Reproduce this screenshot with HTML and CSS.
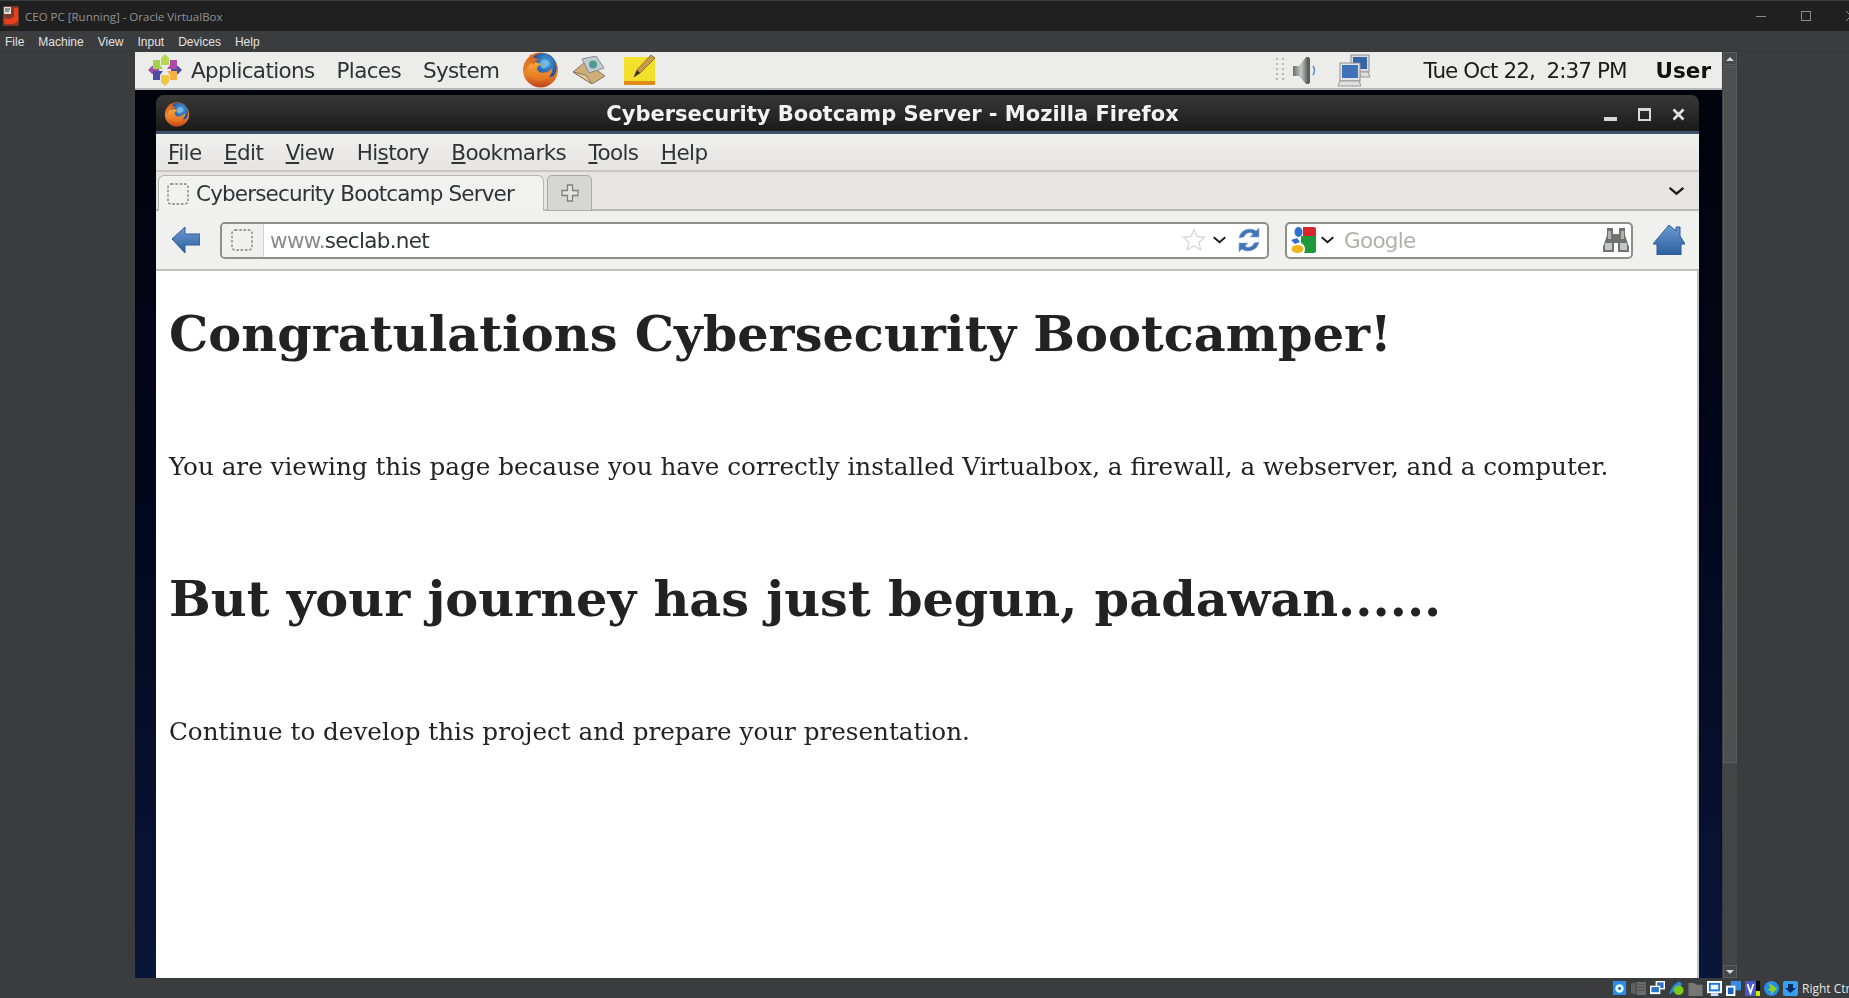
FILE: index.html
```html
<!DOCTYPE html>
<html lang="en">
<head>
<meta charset="utf-8">
<title>CEO PC [Running] - Oracle VirtualBox</title>
<link rel="stylesheet" href="styles.css">
</head>
<body>
<svg class="defs" aria-hidden="true">
  <defs>
    <linearGradient id="gOrange" x1="0" y1="0" x2="0" y2="1"><stop offset="0" stop-color="#d9641f"/><stop offset=".6" stop-color="#e8862a"/><stop offset="1" stop-color="#c2451a"/></linearGradient>
    <linearGradient id="gOrange2" x1="0" y1="0" x2="0" y2="1"><stop offset="0" stop-color="#f4a83a"/><stop offset="1" stop-color="#e56e1e"/></linearGradient>
    <radialGradient id="gGlobe" cx=".55" cy=".4" r=".6"><stop offset="0" stop-color="#4fa6e0"/><stop offset="1" stop-color="#1d4c9c"/></radialGradient>
    <linearGradient id="gBlue" x1="0" y1="0" x2="0" y2="1"><stop offset="0" stop-color="#6d9bd2"/><stop offset="1" stop-color="#2c5f9f"/></linearGradient>
    <linearGradient id="gCone" x1="0" y1="0" x2="1" y2="0"><stop offset="0" stop-color="#6c6e6b"/><stop offset=".5" stop-color="#c4c6c3"/><stop offset="1" stop-color="#4f514e"/></linearGradient>
    <symbol id="fox" viewBox="0 0 36 36">
      <circle cx="18" cy="18" r="17.500" fill="url(#gOrange)"/>
      <path d="M11 5C14 1 20 .5 25 2c6 2 9 8 9 14 0 3-1 6-3 8-5 2-12 1-15-3-3-3-3-8-5-16z" fill="url(#gGlobe)"/>
      <path d="M20 8c3-1 6 0 7 3 1 2-1 3-3 4-2 2-5 2-6-1-1-2 0-5 2-6z" fill="#8fd0ee" opacity=".6"/>
      <path d="M5 15C8 9 15 9 19 13c-3 0-5 2-4 5 2 4 9 4 15-2 0 7-6 14-14 13C9 28 4 22 5 15z" fill="url(#gOrange2)"/>
      <path d="M8 2c-1 4 0 8 3 11 1-3 3-5 6-6-4 0-7-2-9-5z" fill="#dd6a20"/>
    </symbol>
    <symbol id="dash" viewBox="0 0 22 22">
      <rect x="1" y="1" width="20" height="20" rx="3" fill="none" stroke="#7a7a7a" stroke-width="1.300" stroke-dasharray="2.500 1.800"/>
    </symbol>
    <symbol id="chev" viewBox="0 0 16 9">
      <path d="M1.500 1.500 8 7l6.500-5.500" fill="none" stroke="#1c1c1c" stroke-width="2.200"/>
    </symbol>
  </defs>
</svg>

<header class="vb-title">
  <svg class="vb-logo" viewBox="0 0 16 20"><rect width="16" height="20" rx="1" fill="#7d3a2c"/><path d="M1 12c4 2 8 1 10-2V2h4v12c-1 3-4 4-7 4H2c-1-1-1-4-1-6z" fill="#e8401c"/><rect x="1" y="1" width="7" height="7" fill="#ddd"/><path d="M2 3h5M2 5h4" stroke="#444"/></svg>
  <span class="vb-title-text">CEO PC [Running] - Oracle VirtualBox</span>
  <span class="vb-controls">
    <i class="ctl-min"></i><i class="ctl-max"></i>
    <svg class="ctl-close" viewBox="0 0 10 10"><path d="M0 0l10 10M10 0 0 10" stroke="#8c8c8c"/></svg>
  </span>
</header>
<nav class="vb-menu"><span>File</span><span>Machine</span><span>View</span><span>Input</span><span>Devices</span><span>Help</span></nav>

<main class="vb-main">
  <section class="guest">
    <div class="panel">
      <svg class="centos" viewBox="0 0 34 32">
        <path d="M17 0l4 4v7h-8V4z" fill="#b6d84c"/><path d="M17 32l-4-4v-7h8v7z" fill="#f2c640"/><path d="M0 16l4-4h7v8H4z" fill="#a14ea8"/><path d="M34 16l-4 4h-7v-8h7z" fill="#4a4ca4"/>
        <path d="M5 6h7v5l3 4H5z" fill="#a4d04c"/><path d="M29 6h-7v5l-3 4h10z" fill="#b04aa4"/><path d="M5 26h7v-5l3-4H5z" fill="#4a4ca4"/><path d="M29 26h-7v-5l-3-4h10z" fill="#f4b040"/>
      </svg>
      <span class="pm pm-apps">Applications</span>
      <span class="pm pm-places">Places</span>
      <span class="pm pm-system">System</span>
      <svg class="p-fox"><use href="#fox"/></svg>
      <svg class="p-mail" viewBox="0 0 34 28">
        <path d="M1 16 13 6l20 14-13 8z" fill="#cfae7a" stroke="#8c7a5c"/>
        <path d="M10 3l14-3 8 12-15 5z" fill="#c4ccd2" stroke="#7f8a92"/><circle cx="21" cy="8.500" r="4" fill="#4f9a92"/>
        <path d="M1 16l13 3 6 9z" fill="#e0c598" stroke="#8c7a5c"/>
      </svg>
      <svg class="p-note" viewBox="0 0 34 32">
        <rect x="1" y="4" width="31" height="27" rx="1" fill="#e08a1a"/><rect x="1" y="3" width="31" height="24" fill="#f3e02a"/>
        <path d="M11 23l3-7L28 1l4 3-15 15z" fill="#c99a50" stroke="#7a5a30" stroke-width=".8"/><path d="M11 23l3-7 3 3z" fill="#3a3020"/>
      </svg>
      <span class="p-right">
        <svg class="p-dots" viewBox="0 0 8 27"><path d="M1 1v25M7 1v25" stroke="#b5b5b5" stroke-width="2" stroke-dasharray="2 3"/></svg>
        <svg class="p-speaker" viewBox="0 0 25 29">
          <path d="M1 10h6l7-9h3v27h-3l-7-8H1z" fill="url(#gCone)"/><path d="M15 2h3v25h-3z" fill="#5b5d5a"/>
          <path d="M21 10c2 3 2 6 0 9" fill="none" stroke="#5c8fd0" stroke-width="1.600"/>
        </svg>
        <svg class="p-net" viewBox="0 0 34 33">
          <rect x="14" y="1" width="18" height="17" fill="#ddd" stroke="#8d8d8d"/><rect x="16" y="3" width="14" height="12" fill="#3566a8"/>
          <path d="M22 18h9l2 5H24z" fill="#ddd" stroke="#999"/>
          <rect x="3" y="9" width="20" height="18" fill="#e4e4e4" stroke="#8d8d8d"/><rect x="5" y="11" width="16" height="13" fill="#3f72b8"/>
          <path d="M3 27h19l2 5H1z" fill="#e0e0e0" stroke="#999"/>
        </svg>
        <span class="p-clock">Tue Oct 22,  2:37 PM</span>
        <strong class="p-user">User</strong>
      </span>
    </div>

    <div class="desktop">
      <article class="window">
        <div class="wm-title">
          <svg class="wm-fox"><use href="#fox"/></svg>
          <span class="wm-text">Cybersecurity Bootcamp Server - Mozilla Firefox</span>
          <span class="wm-btns">
            <i class="wm-min"></i><i class="wm-max"></i>
            <svg class="wm-close" viewBox="0 0 13 13"><path d="M1.500 1.500l10 10M11.500 1.500l-10 10" stroke="#e4e4e4" stroke-width="2.600"/></svg>
          </span>
        </div>

        <div class="ff-menu">
          <span><u>F</u>ile</span><span><u>E</u>dit</span><span><u>V</u>iew</span><span>Hi<u>s</u>tory</span><span><u>B</u>ookmarks</span><span><u>T</u>ools</span><span><u>H</u>elp</span>
        </div>

        <div class="ff-tabs">
          <div class="tab">
            <svg class="fav"><use href="#dash"/></svg>
            <span>Cybersecurity Bootcamp Server</span>
          </div>
          <div class="newtab">
            <svg viewBox="0 0 18 18"><path d="M6.500 1h5v5.500H17v5h-5.500V17h-5v-5.500H1v-5h5.500z" fill="#e4e4e2" stroke="#7e7e7e" stroke-width="1.300"/></svg>
          </div>
          <svg class="chev tab-chev"><use href="#chev"/></svg>
        </div>

        <div class="ff-nav">
          <svg class="back" viewBox="0 0 28 29">
            <path d="M0 13 13 1v7h15v11H13v8z" fill="url(#gBlue)" stroke="#2a5c9c"/>
          </svg>
          <div class="urlbar">
            <div class="identity"><svg class="fav"><use href="#dash"/></svg></div>
            <span class="url"><span class="url-dim">www.</span>seclab.net</span>
            <svg class="star" viewBox="0 0 24 24"><path d="M12 1.500l3.200 7 7.300.8-5.500 5 1.600 7.500L12 18l-6.600 3.800L7 14.300l-5.500-5 7.300-.8z" fill="#fff" stroke="#d6d6d6" stroke-width="1.300"/></svg>
            <svg class="chev url-chev"><use href="#chev"/></svg>
            <svg class="reload" viewBox="0 0 24 26">
              <path d="M2 11C3 5 8 2 13 2c3 0 5 1 6 2l3-3v9h-9l3-3c-2-2-7-2-9 3z" fill="#3f74b8" stroke="#8fb0d8" stroke-width=".6"/>
              <path d="M22 15c-1 6-6 9-11 9-3 0-5-1-6-2l-3 3v-9h9l-3 3c2 2 7 2 9-3z" fill="#3f74b8" stroke="#8fb0d8" stroke-width=".6"/>
            </svg>
          </div>
          <div class="searchbar">
            <svg class="google" viewBox="0 0 25 26">
              <path d="M12 0h11c1 0 2 1 2 2v7H12z" fill="#d8262c"/>
              <path d="M10 9h15v15c0 1-1 2-2 2H13c2-4 1-8-3-10z" fill="#1e9a3c"/>
              <ellipse cx="7.500" cy="5" rx="4" ry="5" fill="#2f6fd0"/>
              <path d="M0 13l6-2 3 4-5 2z" fill="#2f6fd0"/>
              <ellipse cx="6.500" cy="22" rx="6" ry="4" fill="#f0b41c"/>
            </svg>
            <svg class="chev search-chev"><use href="#chev"/></svg>
            <span class="search-ph">Google</span>
            <svg class="binoc" viewBox="0 0 26 24">
              <path d="M4 0h6v6h6V0h6v7l4 12v5H15v-9h-4v9H0v-5L4 7z" fill="#6e716e"/>
              <rect x="2" y="15" width="7" height="7" fill="#c4c6c2"/><rect x="17" y="15" width="7" height="7" fill="#c4c6c2"/><rect x="5" y="3" width="3" height="8" fill="#b0b2ae"/><rect x="18" y="3" width="3" height="8" fill="#b0b2ae"/>
            </svg>
          </div>
          <svg class="home" viewBox="0 0 32 30">
            <path d="M16 0l7 6V2h4v9l5 8h-4v11H4V19H0z" fill="url(#gBlue)" stroke="#2a5c9c"/>
          </svg>
        </div>

        <div class="content">
          <h1>Congratulations Cybersecurity Bootcamper!</h1>
          <p>You are viewing this page because you have correctly installed Virtualbox, a firewall, a webserver, and a computer.</p>
          <h1>But your journey has just begun, padawan......</h1>
          <p>Continue to develop this project and prepare your presentation.</p>
        </div>
      </article>
    </div>
  </section>

  <aside class="vscroll">
    <div class="sb-btn"><i class="sb-up"></i></div>
    <div class="sb-thumb"></div>
    <div class="sb-track"></div>
    <div class="sb-btn"><i class="sb-down"></i></div>
  </aside>
</main>

<footer class="vb-status">
  <svg class="st" viewBox="0 0 16 16"><rect width="14" height="15" x="1" rx="1" fill="#2a8ce8"/><circle cx="8" cy="8" r="4.500" fill="#dff"/><circle cx="8" cy="8" r="1.500" fill="#1a5ab0"/></svg>
  <svg class="st st-dim" viewBox="0 0 16 16"><path d="M0 3l5-2v13l-5-1z" fill="#6a6a6a"/><rect x="6" y="1" width="10" height="14" fill="#777"/><path d="M7 4h8M7 7h8M7 10h8" stroke="#555"/></svg>
  <svg class="st" viewBox="0 0 16 16"><rect x="6" y="0" width="10" height="9" fill="#fff"/><rect x="7.500" y="1.500" width="7" height="6" fill="#2a70c8"/><rect x="0" y="5" width="11" height="9" fill="#fff"/><rect x="1.500" y="6.500" width="8" height="5.500" fill="#2a70c8"/></svg>
  <svg class="st" viewBox="0 0 17 16"><path d="M0 15C2 8 6 2 12 0l3 3-5 5z" fill="#2a8ce8"/><circle cx="11" cy="10" r="5.500" fill="#7cc81e"/></svg>
  <svg class="st" viewBox="0 0 15 16"><path d="M0 2h6l2 2h7v12H0z" fill="#777"/></svg>
  <svg class="st" viewBox="0 0 16 16"><rect x="0" y="0" width="16" height="13" fill="#fff"/><rect x="2" y="2" width="12" height="9" fill="#1e78d8"/><rect x="4" y="4" width="8" height="5" fill="#e8f4ff"/><rect x="4" y="13" width="8" height="3" fill="#cfe4fa"/></svg>
  <svg class="st" viewBox="0 0 16 16"><rect x="5" y="0" width="11" height="10" fill="#3a8ce0"/><rect x="0" y="5" width="10" height="11" fill="#fff"/><rect x="2" y="7" width="6" height="7" fill="#1c62b8"/></svg>
  <span class="st-v"><svg class="st-vbox" viewBox="0 0 11 15"><rect width="11" height="15" fill="#4a58c8"/><path d="M2.500 3 5.500 12l3-9" fill="none" stroke="#fff" stroke-width="1.800"/></svg><span class="st-meter"><i></i></span></span>
  <svg class="st" viewBox="0 0 16 16"><circle cx="8" cy="8" r="8" fill="#2a8ce8"/><path d="M5 2l9 6-7 7 1-4-5-2 4-1z" fill="#8cd81e"/></svg>
  <svg class="st" viewBox="0 0 15 15"><rect width="15" height="15" rx="2" fill="#38a0f0"/><path d="M5 3h5v4h3l-5.500 5L2 7h3z" fill="#0b2a6a"/></svg>
  <span class="st-key">Right Ctrl</span>
</footer>
</body>
</html>
```

FILE: styles.css
```css
* { box-sizing: border-box; }
html, body { margin: 0; height: 100%; }
body {
  width: 1849px;
  height: 998px;
  overflow: hidden;
  display: flex;
  flex-direction: column;
  background: #3b3c3e;
  font-family: "DejaVu Sans", sans-serif;
}
.defs { width: 0; height: 0; position: absolute; }

/* VirtualBox chrome */
.vb-title {
  height: 31px;
  flex: none;
  display: flex;
  align-items: center;
  padding-left: 3px;
  background: #202020;
  border-top: 1px solid #3c3c40;
  color: #929292;
  font: 11.500px "Open Sans", sans-serif;
}
.vb-logo { width: 16px; height: 20px; }
.vb-title-text { margin-left: 6px; }
.vb-controls { margin-left: auto; margin-right: -7px; flex: none; display: flex; align-items: center; width: 100px; gap: 35px; }
.ctl-min { width: 10px; height: 1px; background: #8c8c8c; }
.ctl-max { width: 10px; height: 10px; border: 1px solid #8c8c8c; }
.ctl-close { width: 10px; height: 10px; flex: none; }

.vb-menu {
  height: 21px;
  flex: none;
  display: flex;
  align-items: center;
  padding: 1px 0 0 5px;
  gap: 14px;
  color: #e2e2e2;
  font: 12px "Liberation Sans", sans-serif;
  border-bottom: 1px solid #38393b;
}

.vb-main { flex: 1; min-height: 0; display: flex; padding-left: 135px; }

/* Guest */
.guest {
  width: 1587px;
  display: flex;
  flex-direction: column;
  filter: blur(.45px);
}
.panel {
  height: 38px;
  flex: none;
  display: flex;
  align-items: center;
  background: #ececea;
  border-bottom: 2px solid #b8b8b8;
  color: #2e3436;
  font-size: 21.500px;
  letter-spacing: -.65px;
  padding-left: 13px;
}
.centos { width: 34px; height: 32px; flex: none; }
.pm-apps { margin-left: 9px; }
.pm-places { margin-left: 22px; }
.pm-system { margin-left: 22px; }
.p-fox { width: 37px; height: 36px; margin-left: 23px; }
.p-mail { width: 34px; height: 28px; margin-left: 13px; }
.p-note { width: 34px; height: 32px; margin-left: 17px; }
.p-right { margin-left: auto; display: flex; align-items: center; padding-right: 11px; }
.p-dots { width: 8px; height: 27px; }
.p-speaker { width: 25px; height: 29px; margin-left: 8px; }
.p-net { width: 34px; height: 33px; margin-left: 20px; }
.p-clock { margin-left: 52px; white-space: pre; color: #1c1c1c; letter-spacing: -.95px; }
.p-user { margin-left: 29px; color: #111; letter-spacing: 0; }

.desktop {
  flex: 1;
  min-height: 0;
  display: flex;
  padding: 5px 23px 0 21px;
  background: linear-gradient(#01030c, #02071c 45%, #0a1639);
}
.window {
  flex: 1;
  min-width: 0;
  display: flex;
  flex-direction: column;
  border-radius: 8px 8px 0 0;
  overflow: hidden;
}

.wm-title {
  height: 39px;
  flex: none;
  position: relative;
  display: flex;
  align-items: center;
  justify-content: center;
  padding: 1px 70px 0 0;
  background: linear-gradient(#383838, #1a1a1a);
  border-bottom: 3px solid #3e536e;
  color: #f2f2f2;
  font-weight: bold;
  font-size: 21px;
}
.wm-fox { width: 26px; height: 25px; position: absolute; left: 8px; top: 7px; }
.wm-btns { position: absolute; right: 14px; top: 13px; display: flex; align-items: flex-end; gap: 21px; }
.wm-min { width: 13px; height: 4px; background: #d8d8d8; }
.wm-max { width: 13px; height: 13px; border: 2px solid #d8d8d8; border-top-width: 3px; }
.wm-close { width: 13px; height: 13px; }

.ff-menu {
  height: 38px;
  flex: none;
  display: flex;
  align-items: center;
  gap: 22.400px;
  padding-left: 12px;
  background: linear-gradient(#f0f0ef, #e5e4e2);
  border-bottom: 2px solid #c6c6c4;
  color: #2e3436;
  font-size: 21.500px;
  letter-spacing: -.6px;
}
.ff-tabs {
  height: 39px;
  flex: none;
  display: flex;
  align-items: flex-end;
  padding-left: 2px;
  background: #e6e5e3;
  border-bottom: 2px solid #b9b9b7;
  position: relative;
}
.tab {
  width: 386px;
  height: 36px;
  margin-bottom: -2px;
  display: flex;
  align-items: center;
  gap: 7px;
  padding-left: 8px;
  background: #f1f1f0;
  border: 1px solid #b5b5b3;
  border-bottom: 0;
  border-radius: 6px 6px 0 0;
  color: #2e3436;
  font-size: 21.500px;
  letter-spacing: -.85px;
}
.fav { width: 22px; height: 22px; flex: none; }
.newtab {
  width: 45px;
  height: 36px;
  margin-left: 3px;
  margin-bottom: -2px;
  display: flex;
  align-items: center;
  justify-content: center;
  background: #d6d6d4;
  border: 1px solid #a8a8a6;
  border-radius: 5px 5px 0 0;
}
.newtab svg { width: 18px; height: 18px; }
.chev { width: 15px; height: 8px; flex: none; }
.tab-chev { position: absolute; right: 14px; top: 14px; width: 17px; height: 10px; }

.ff-nav {
  height: 60px;
  flex: none;
  display: flex;
  align-items: center;
  background: #f0f0ef;
  border-bottom: 2px solid #c0c0be;
  padding-left: 16px;
}
.back { width: 28px; height: 29px; flex: none; }
.urlbar, .searchbar {
  height: 37px;
  display: flex;
  align-items: center;
  background: #fff;
  border: 2px solid #8e8e8c;
  border-radius: 5px;
  font-size: 21.500px;
  letter-spacing: -.7px;
}
.urlbar { width: 1049px; margin-left: 20px; padding-right: 6px; }
.identity {
  width: 42px;
  height: 100%;
  flex: none;
  display: flex;
  align-items: center;
  justify-content: center;
  padding-right: 2px;
  background: #f0f0ef;
  border-right: 1px solid #d4d4d2;
  border-radius: 3px 0 0 3px;
}
.url { margin-left: 6px; color: #2e3436; }
.url-dim { color: #8b8d8b; }
.star { width: 24px; height: 26px; margin-left: auto; }
.url-chev { margin-left: 6px; }
.reload { width: 24px; height: 26px; margin-left: 10px; }
.searchbar { width: 348px; margin-left: 16px; padding-left: 4px; padding-right: 2px; }
.google { width: 25px; height: 26px; flex: none; }
.search-chev { margin-left: 4px; }
.search-ph { margin-left: 9px; color: #b0b0ae; }
.binoc { width: 26px; height: 24px; margin-left: auto; }
.home { width: 32px; height: 30px; margin-left: 20px; }

.content {
  flex: 1;
  min-height: 0;
  padding: 36px 12px 0 13px;
  background: #fff;
  border-right: 2px solid #c4c4c4;
  color: #222;
  font-family: "DejaVu Serif", serif;
}
.content h1 { margin: 0; font-size: 49.400px; line-height: 54px; font-weight: bold; }
.content p { margin: 92px 0 91px; font-size: 24.650px; line-height: 28px; white-space: nowrap; }

/* Scrollbar */
.vscroll { width: 14px; margin-left: 1px; display: flex; flex-direction: column; background: #444546; }
.sb-btn {
  height: 13px;
  flex: none;
  display: flex;
  align-items: center;
  justify-content: center;
  background: #48494b;
  border: 1px solid #5b5c5e;
}
.sb-up, .sb-down { width: 0; height: 0; border-left: 4px solid transparent; border-right: 4px solid transparent; }
.sb-up { border-bottom: 4px solid #d8d8d8; }
.sb-down { border-top: 4px solid #d8d8d8; }
.sb-thumb { height: 697px; flex: none; margin-top: 1px; background: #4e4f51; border: 1px solid #5a5b5d; }
.sb-track { flex: 1; }

/* Status */
.vb-status {
  height: 20px;
  flex: none;
  display: flex;
  align-items: center;
  justify-content: flex-start;
  padding-left: 1612px;
  gap: 4px;
  white-space: nowrap;
  overflow: hidden;
  color: #e6e6e6;
  font: 12px "Open Sans", sans-serif;
}
.st { width: 15px; height: 15px; flex: none; }
.st-dim { opacity: .8; }
.st-v { display: flex; flex: none; }
.st-vbox { width: 11px; height: 15px; }
.st-meter { width: 4px; height: 15px; background: #000; display: flex; align-items: flex-end; }
.st-meter i { width: 100%; height: 5px; background: #c8f000; }
.st-key { flex: none; }
```
